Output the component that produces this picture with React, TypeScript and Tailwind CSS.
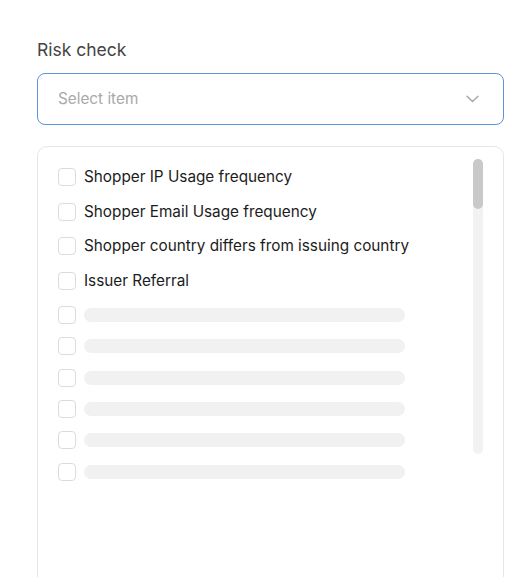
import React from "react";

const items = [
  "Shopper IP Usage frequency",
  "Shopper Email Usage frequency",
  "Shopper country differs from issuing country",
  "Issuer Referral",
];

function Box() {
  return <span className="block h-[18px] w-[18px] shrink-0 rounded-[4px] border border-[#dcdcdc] bg-white" />;
}

export default function App() {
  return (
    <div className="h-[577px] w-[531px] overflow-hidden bg-white pl-[37px] pr-[27px] pt-[38px] font-['Inter',sans-serif]">
      <div className="h-6 text-[17.5px] leading-6 text-[#444]">Risk check</div>
      <div className="mt-[11px] flex h-[52px] items-center justify-between rounded-lg border border-[#5b93dc] pl-5 pr-[24px]">
        <span className="text-[15.3px] text-[#a9a9a9]">Select item</span>
        <svg width="13" height="8" viewBox="0 0 13 8" fill="none">
          <path d="M1 1.2 L6.5 6.5 L12 1.2" stroke="#a3a3a3" strokeWidth="1.3" strokeLinecap="round" strokeLinejoin="round" />
        </svg>
      </div>
      <div className="relative mt-[21px] h-[440px] rounded-t-[10px] border border-[#e6e6e6] pl-5 pt-[13px]">
        {items.map((t) => (
          <div key={t} className="flex h-[34.5px] items-center gap-2">
            <Box />
            <span className="text-[15.3px] leading-5 text-[#1c1c1c]">{t}</span>
          </div>
        ))}
        <div className="pt-[1.5px]">
          {[0, 1, 2, 3, 4, 5].map((i) => (
            <div key={i} className="flex h-[31.3px] items-center gap-2">
              <Box />
              <span className="block h-[14px] w-[321px] rounded-full bg-[#f1f1f1]" />
            </div>
          ))}
        </div>
        <div className="absolute right-[20px] top-[12px] h-[295px] w-[10px] rounded-full bg-[#f2f2f2]">
          <div className="h-[50px] w-[10px] rounded-full bg-[#c9c9c9]" />
        </div>
      </div>
    </div>
  );
}
